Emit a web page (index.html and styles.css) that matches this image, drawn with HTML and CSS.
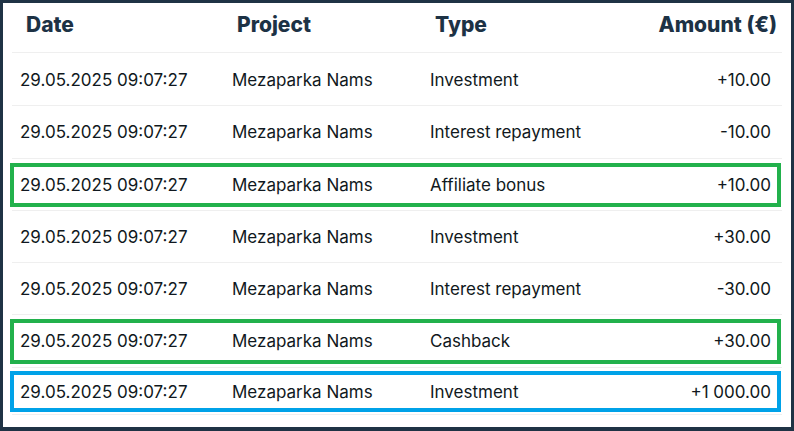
FILE: index.html
```html
<!DOCTYPE html>
<html lang="en">
<head>
<meta charset="utf-8">
<title>Transactions</title>
<link rel="stylesheet" href="styles.css">
</head>
<body>
<div class="frame">
  <div class="table">
    <div class="head">
      <div>Date</div>
      <div>Project</div>
      <div>Type</div>
      <div class="num">Amount (€)</div>
    </div>
    <div class="rows">
      <div class="row"><div class="cells"><div>29.05.2025 09:07:27</div><div>Mezaparka Nams</div><div>Investment</div><div class="num">+10.00</div></div></div>
      <div class="row"><div class="cells"><div>29.05.2025 09:07:27</div><div>Mezaparka Nams</div><div>Interest repayment</div><div class="num">-10.00</div></div></div>
      <div class="row"><div class="cells mark-green"><div>29.05.2025 09:07:27</div><div>Mezaparka Nams</div><div>Affiliate bonus</div><div class="num">+10.00</div></div></div>
      <div class="row"><div class="cells"><div>29.05.2025 09:07:27</div><div>Mezaparka Nams</div><div>Investment</div><div class="num">+30.00</div></div></div>
      <div class="row"><div class="cells"><div>29.05.2025 09:07:27</div><div>Mezaparka Nams</div><div>Interest repayment</div><div class="num">-30.00</div></div></div>
      <div class="row"><div class="cells mark-green"><div>29.05.2025 09:07:27</div><div>Mezaparka Nams</div><div>Cashback</div><div class="num">+30.00</div></div></div>
      <div class="row last"><div class="cells mark-blue"><div>29.05.2025 09:07:27</div><div>Mezaparka Nams</div><div>Investment</div><div class="num">+1 000.00</div></div></div>
    </div>
  </div>
</div>
</body>
</html>
```
FILE: styles.css
```css
html, body {
  margin: 0;
  padding: 0;
  background: #ffffff;
}
.frame {
  box-sizing: border-box;
  width: 794px;
  height: 431px;
  border: 3px solid #1f3345;
  border-bottom-width: 4px;
  background: #ffffff;
  padding: 0 9px;
  font-family: Inter, "Noto Sans", sans-serif;
  overflow: hidden;
}
.table {
  display: flex;
  flex-direction: column;
}
.head {
  display: grid;
  grid-template-columns: 211px 198px 1fr auto;
  align-items: center;
  height: 48px;
  padding: 0 5px 1px 14px;
  border-bottom: 1px solid #efefef;
  color: #1d3245;
  font-weight: 800;
  font-size: 21px;
  box-sizing: content-box;
}
.head > div {
  margin-top: -5px;
}
.rows {
  padding-top: 1px;
  display: flex;
  flex-direction: column;
}
.row {
  height: 52.25px;
  box-sizing: border-box;
  padding: 4px 1px 3px 0;
  border-bottom: 1px solid #efefef;
  display: flex;
  flex-direction: column;
}
.row.last {
  height: 47px;
  padding-top: 3px;
  padding-bottom: 2px;
}
.cells {
  flex: 1;
  margin-left: -2px;
  display: grid;
  grid-template-columns: 212px 198px 1fr auto;
  align-items: center;
  padding: 0 6px;
  border: 4px solid transparent;
  color: #101820;
  font-size: 17px;
}
.row.last .cells > div {
  padding-top: 2px;
}
.num {
  text-align: right;
}
.mark-green {
  border-color: #22b14c;
}
.mark-blue {
  border-color: #00a2e8;
}
```
